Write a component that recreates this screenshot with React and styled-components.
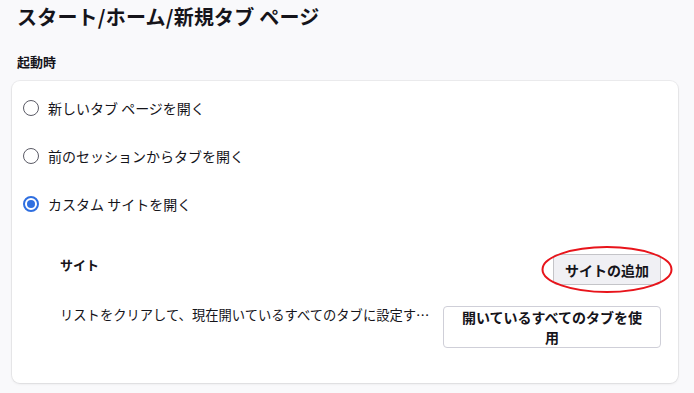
import React, { useState } from "react";
import styled, { createGlobalStyle } from "styled-components";

const GlobalStyle = createGlobalStyle`
  html, body {
    margin: 0;
    padding: 0;
    background-color: #f9f9fb;
  }
  body {
    font-family: "Noto Sans CJK JP", "Noto Sans", sans-serif;
    color: #15141a;
  }
`;

const Page = styled.div`
  width: 694px;
  height: 393px;
  box-sizing: border-box;
  padding: 0 16px 0 12px;
  overflow: hidden;
`;

const PageTitle = styled.h1`
  margin: 5px 0 0 5px;
  font-size: 20px;
  line-height: 24px;
  font-weight: 700;
  letter-spacing: 0.2px;
`;

const SectionLabel = styled.h2`
  margin: 24px 0 0 5px;
  font-size: 13px;
  line-height: 18px;
  font-weight: 700;
`;

const Card = styled.div`
  margin-top: 10px;
  background-color: #fff;
  border-radius: 8px;
  box-shadow: 0 0 0 1px rgba(0, 0, 0, 0.05), 0 1px 3px rgba(0, 0, 0, 0.08);
  padding: 3px 17px 35px 11px;
`;

const RadioRow = styled.label`
  display: flex;
  align-items: center;
  height: 48px;
  gap: 9px;
  font-size: 14px;
  cursor: pointer;
`;

const RadioCircle = styled.span`
  width: 16px;
  height: 16px;
  box-sizing: border-box;
  border-radius: 50%;
  border: ${(p) => (p.checked ? "2px solid #2f6fe0" : "1.5px solid #5b5b66")};
  display: flex;
  align-items: center;
  justify-content: center;
  flex-shrink: 0;

  &::after {
    content: "";
    width: 8px;
    height: 8px;
    border-radius: 50%;
    background-color: ${(p) => (p.checked ? "#2f6fe0" : "transparent")};
  }
`;

const SitesBlock = styled.div`
  margin: 26px 0 0 37px;
  display: flex;
  flex-direction: column;
  gap: 21px;
`;

const Row = styled.div`
  display: flex;
  align-items: flex-start;
  justify-content: space-between;
  gap: 10px;
`;

const SubLabel = styled.div`
  font-size: 13px;
  font-weight: 700;
  line-height: 18px;
  padding-top: 2px;
`;

const Description = styled.div`
  flex: 1;
  min-width: 0;
  font-size: 13.3px;
  line-height: 18px;
  white-space: nowrap;
  overflow: hidden;
  text-overflow: ellipsis;
`;

const ButtonWrap = styled.div`
  position: relative;
  flex-shrink: 0;
`;

const Button = styled.button`
  box-sizing: border-box;
  flex-shrink: 0;
  font-family: inherit;
  font-size: 14px;
  font-weight: 700;
  color: #15141a;
  border-radius: 4px;
  cursor: pointer;
  background-color: ${(p) => (p.$primary ? "#f0f0f4" : "#fff")};
  border: 1px solid ${(p) => (p.$primary ? "#c4c4c8" : "#cfcfd8")};
  width: ${(p) => p.$width}px;
  min-height: ${(p) => p.$height}px;
  padding: 0 ${(p) => (p.$primary ? 8 : 16)}px;
  white-space: ${(p) => (p.$primary ? "nowrap" : "normal")};
  line-height: 20px;
`;

const Highlight = styled.svg`
  position: absolute;
  left: -12px;
  top: -8px;
  width: 132px;
  height: 47px;
  pointer-events: none;
  overflow: visible;
`;

const options = [
  "新しいタブ ページを開く",
  "前のセッションからタブを開く",
  "カスタム サイトを開く",
];

export default function App() {
  const [selected, setSelected] = useState(2);

  return (
    <Page>
      <GlobalStyle />
      <PageTitle>スタート/ホーム/新規タブ ページ</PageTitle>
      <SectionLabel>起動時</SectionLabel>
      <Card>
        {options.map((label, i) => (
          <RadioRow key={label} onClick={() => setSelected(i)}>
            <RadioCircle checked={selected === i} />
            {label}
          </RadioRow>
        ))}

        <SitesBlock>
          <Row>
            <SubLabel>サイト</SubLabel>
            <ButtonWrap>
              <Button $primary $width={108} $height={31}>
                サイトの追加
              </Button>
              <Highlight viewBox="0 0 132 47">
                <ellipse cx="66" cy="23.5" rx="64.5" ry="22.5" fill="none" stroke="#e8141b" strokeWidth="2" />
              </Highlight>
            </ButtonWrap>
          </Row>
          <Row>
            <Description>
              リストをクリアして、現在開いているすべてのタブに設定するには、このボタンをクリックしてください
            </Description>
            <Button $width={218} $height={42}>
              開いているすべてのタブを使用
            </Button>
          </Row>
        </SitesBlock>
      </Card>
    </Page>
  );
}
